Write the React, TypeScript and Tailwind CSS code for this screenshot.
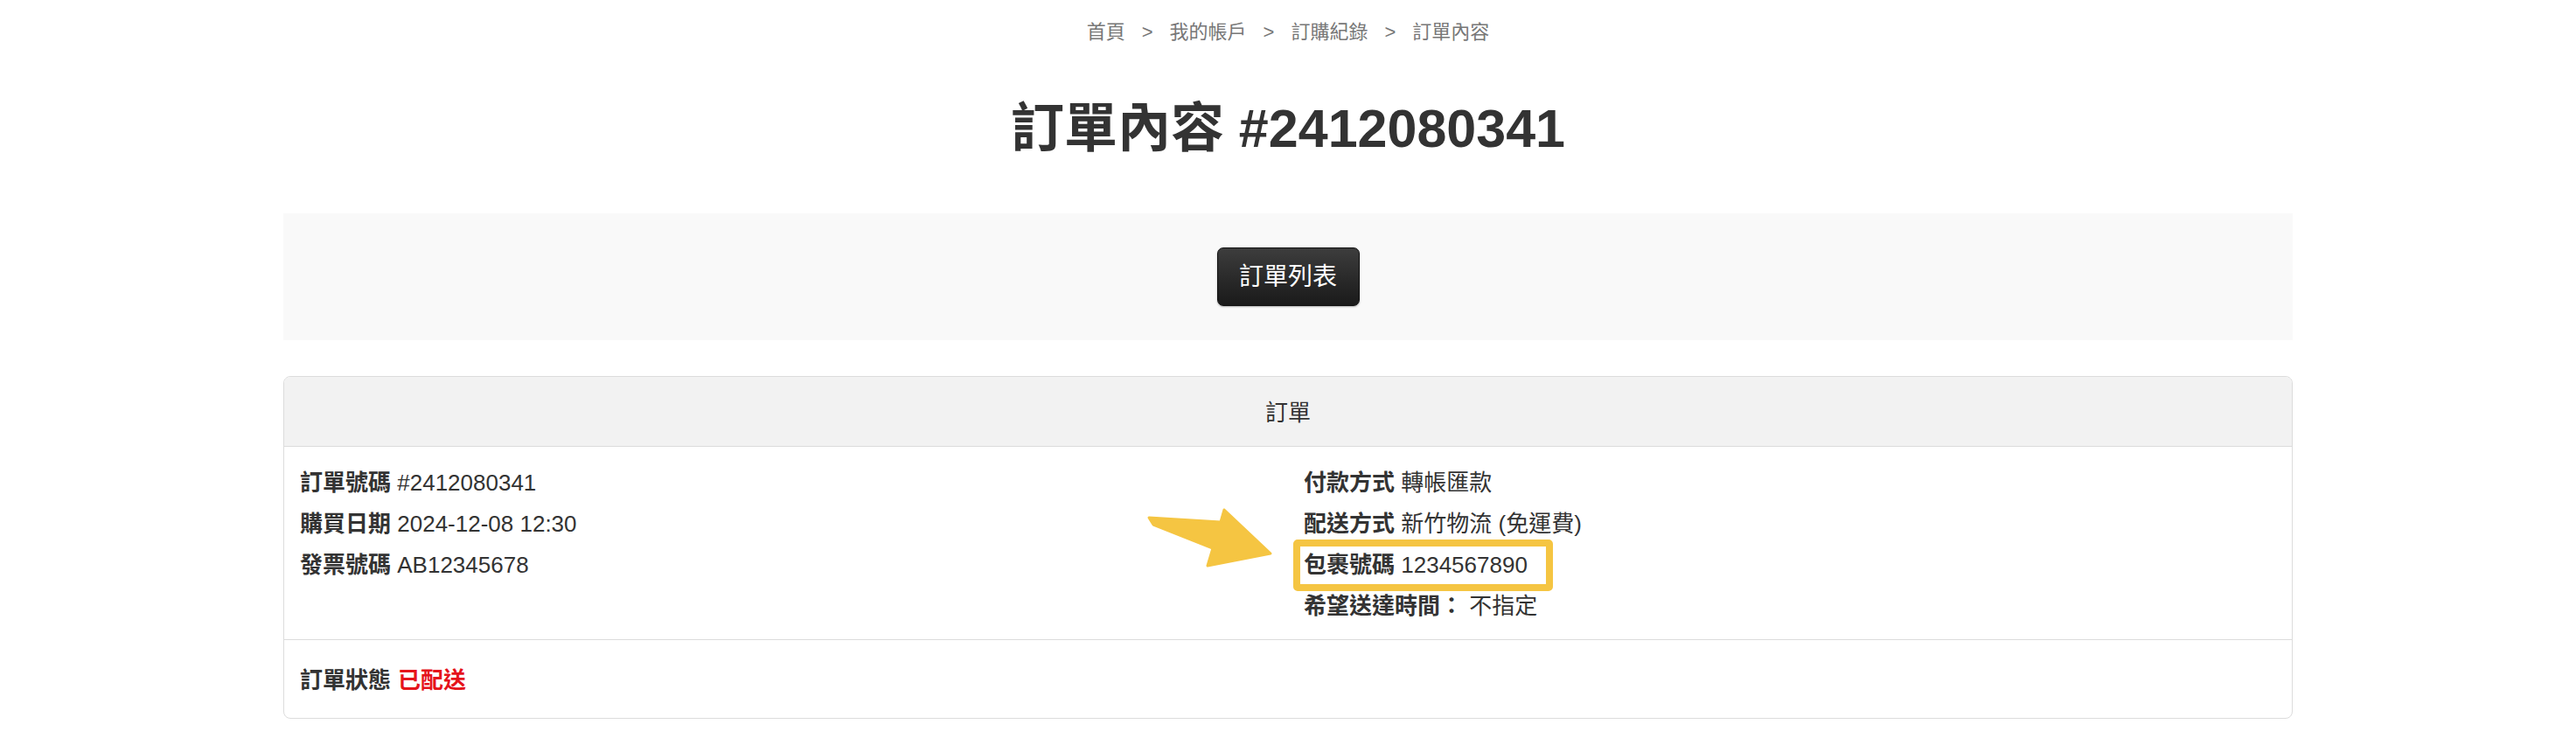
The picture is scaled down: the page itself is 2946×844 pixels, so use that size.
import React from "react";

const sans = "font-['Liberation_Sans','Noto_Sans_CJK_TC',sans-serif]";

const crumbs = ["首頁", "我的帳戶", "訂購紀錄", "訂單內容"];

const Row = ({ label, value }: { label: string; value: React.ReactNode }) => (
  <div className="leading-[47px] whitespace-nowrap">
    <span className="font-bold">{label}</span> <span>{value}</span>
  </div>
);

const App = () => {
  return (
    <div className={`${sans} bg-white text-[#333] w-[2946px] h-[844px]`}>
      {/* breadcrumb */}
      <div className="h-[72px] flex items-center justify-center text-[22px] text-[#777]">
        {crumbs.map((c, i) => (
          <React.Fragment key={c}>
            {i > 0 && <span className="mx-[19px]">&gt;</span>}
            <span>{c}</span>
          </React.Fragment>
        ))}
      </div>

      <h1 className="mt-[35px] text-center text-[61px] leading-[80px] font-bold">
        訂單內容 #2412080341
      </h1>

      <div className="w-[2298px] mx-auto">
        <div className="mt-[57px] h-[145px] bg-[#f9f9f9] flex items-center justify-center">
          <button className="w-[163px] h-[67px] rounded-[7px] border border-[#111] bg-gradient-to-b from-[#3d3d3d] to-[#1a1a1a] text-white text-[28px] shadow-[0_1px_2px_rgba(0,0,0,0.3)]">
            訂單列表
          </button>
        </div>

        <div className="relative mt-[41px] border border-[#dcdcdc] rounded-[8px] overflow-hidden">
          <div className="h-[80px] pt-[4px] bg-[#f2f2f2] border-b border-[#dcdcdc] flex items-center justify-center text-[26px]">
            訂單
          </div>

          <div className="grid grid-cols-2 pt-[18px] pb-[14px] text-[26px] border-b border-[#dcdcdc]">
            <div className="px-[18px]">
              <Row label="訂單號碼" value="#2412080341" />
              <Row label="購買日期" value="2024-12-08 12:30" />
              <Row label="發票號碼" value="AB12345678" />
            </div>
            <div className="px-[18px]">
              <Row label="付款方式" value="轉帳匯款" />
              <Row label="配送方式" value="新竹物流 (免運費)" />
              <div className="leading-[47px] whitespace-nowrap">
                <span className="relative inline-block">
                  <span className="absolute -left-[12px] -right-[29px] -top-[6px] -bottom-[6px] border-[8px] border-[#f5c542] rounded-[5px]"></span>
                  <span className="font-bold">包裹號碼</span> <span>1234567890</span>
                </span>
              </div>
              <Row label="希望送達時間：" value="不指定" />
            </div>
          </div>

          <div className="h-[89px] pt-[3px] flex items-center px-[18px] text-[26px]">
            <span className="font-bold">訂單狀態</span>
            <span className="ml-[8px] text-[#e5131b] font-bold">已配送</span>
          </div>

          {/* pointer arrow */}
          <svg
            className="absolute left-[981px] top-[147px]"
            width="155"
            height="75"
            viewBox="0 0 155 75"
          >
            <polygon
              points="8,14 90,19 94,5 147,55 75,69 81,49 13,22"
              fill="#f5c542"
              stroke="#f5c542"
              strokeWidth="3"
              strokeLinejoin="round"
            />
          </svg>
        </div>
      </div>
    </div>
  );
};

export default App;
